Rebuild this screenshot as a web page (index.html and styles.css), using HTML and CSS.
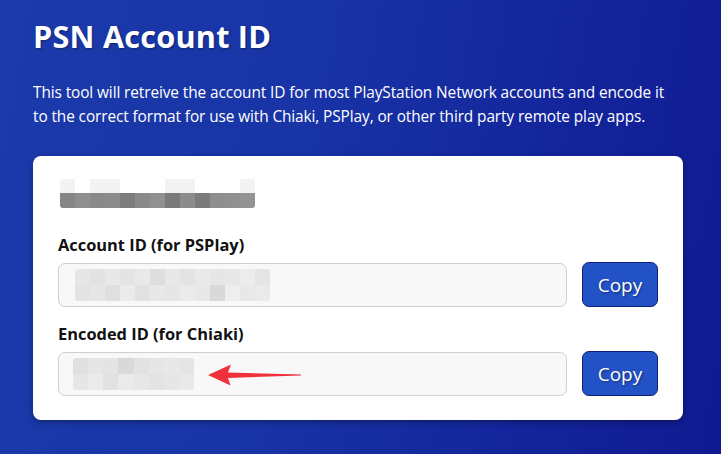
FILE: index.html
```html
<!DOCTYPE html>
<html>
<head>
<meta charset="utf-8">
<link rel="stylesheet" href="styles.css">
</head>
<body>
<main class="page">
  <h1 class="title">PSN Account ID</h1>
  <p class="intro">This tool will retreive the account ID for most PlayStation Network accounts and encode it to the correct format for use with Chiaki, PSPlay, or other third party remote play apps.</p>
  <section class="card">
    <div class="name-blur">
      <div class="row top">
        <i style="background:#f3f3f3"></i><i style="background:#fff"></i><i style="background:#f3f3f3"></i><i style="background:#f3f3f3"></i><i style="background:#fff"></i><i style="background:#fff"></i><i style="background:#fff"></i><i style="background:#f3f3f3"></i><i style="background:#f3f3f3"></i><i style="background:#fff"></i><i style="background:#fff"></i><i style="background:#fff"></i><i style="background:#f3f3f3"></i>
      </div>
      <div class="row">
        <i style="background:#858585"></i><i style="background:#8f8f8f"></i><i style="background:#8a8a8a"></i><i style="background:#8c8c8c"></i><i style="background:#7d7d7d"></i><i style="background:#8a8a8a"></i><i style="background:#909090"></i><i style="background:#7a7a7a"></i><i style="background:#8c8c8c"></i><i style="background:#7b7b7b"></i><i style="background:#8e8e8e"></i><i style="background:#909090"></i><i style="background:#939393"></i>
      </div>
    </div>
    <label class="label">Account ID (for PSPlay)</label>
    <div class="field-row">
      <div class="input">
        <div class="blur wide">
          <div class="row"><i style="background:#e6e6e6"></i><i style="background:#e2e2e2"></i><i style="background:#e8e8e8"></i><i style="background:#e4e4e4"></i><i style="background:#e9e9e9"></i><i style="background:#dedede"></i><i style="background:#e8e8e8"></i><i style="background:#e3e3e3"></i><i style="background:#e9e9e9"></i><i style="background:#e6e6e6"></i><i style="background:#e7e7e7"></i><i style="background:#ececec"></i><i style="background:#e5e5e5"></i></div>
          <div class="row"><i style="background:#e3e3e3"></i><i style="background:#e6e6e6"></i><i style="background:#dfdfdf"></i><i style="background:#ebebeb"></i><i style="background:#e1e1e1"></i><i style="background:#e8e8e8"></i><i style="background:#e6e6e6"></i><i style="background:#ebebeb"></i><i style="background:#e8e8e8"></i><i style="background:#d9d9d9"></i><i style="background:#eeeeee"></i><i style="background:#e8e8e8"></i><i style="background:#eaeaea"></i></div>
        </div>
      </div>
      <button class="copy">Copy</button>
    </div>
    <label class="label">Encoded ID (for Chiaki)</label>
    <div class="field-row">
      <div class="input">
        <div class="blur narrow">
          <div class="row"><i style="background:#e0e0e0"></i><i style="background:#e6e6e6"></i><i style="background:#e4e4e4"></i><i style="background:#d9d9d9"></i><i style="background:#e2e2e2"></i><i style="background:#e6e6e6"></i><i style="background:#e8e8e8"></i><i style="background:#e5e5e5"></i></div>
          <div class="row"><i style="background:#e6e6e6"></i><i style="background:#ebebeb"></i><i style="background:#e1e1e1"></i><i style="background:#eaeaea"></i><i style="background:#e7e7e7"></i><i style="background:#e3e3e3"></i><i style="background:#e6e6e6"></i><i style="background:#e9e9e9"></i></div>
        </div>
        <svg class="arrow" width="96" height="24" viewBox="0 0 96 24">
          <path d="M1 12 L24 1.5 L21 9.5 L94 11.5 L94 12.5 L21 15 L23.5 22.5 Z" fill="#f0303a"/>
        </svg>
      </div>
      <button class="copy">Copy</button>
    </div>
  </section>
</main>
</body>
</html>
```
FILE: styles.css
```css
html, body {
  margin: 0;
  padding: 0;
  height: 100%;
}
body {
  background: linear-gradient(100deg, #1c3aab 0%, #1834a6 40%, #13249b 75%, #0f1a90 100%);
  font-family: "Open Sans", "Noto Sans", sans-serif;
  color: #fff;
  overflow: hidden;
}
.page {
  padding: 15px 38px 0 33px;
}
.title {
  margin: 0;
  font-size: 30.7px;
  font-weight: 700;
  line-height: 42px;
  letter-spacing: 0.2px;
  text-shadow: 1px 1px 2px rgba(0,0,0,0.35);
}
.intro {
  margin: 24px 0 0 0;
  width: 645px;
  font-size: 15.4px;
  line-height: 24px;
  letter-spacing: -0.1px;
}
.card {
  margin-top: 27px;
  width: 650px;
  box-sizing: border-box;
  background: #fff;
  border-radius: 8px;
  box-shadow: 0 2px 6px rgba(0,0,0,0.35);
  padding: 23px 25px 24px 25px;
  color: #111;
}
.name-blur {
  width: 195px;
  margin-left: 2px;
  border-radius: 3px;
  overflow: hidden;
}
.row {
  display: flex;
}
.row i {
  flex: 1;
  height: 15px;
}
.name-blur .row.top i { height: 14px; }
.label {
  display: block;
  margin-top: 27px;
  font-size: 16.4px;
  font-weight: 700;
  line-height: 20px;
  color: #111;
}
.field-row {
  display: flex;
  align-items: center;
  gap: 15px;
  margin-top: 7px;
}
.field-row + .label {
  margin-top: 17px;
}
.input {
  position: relative;
  flex: 1;
  height: 44px;
  box-sizing: border-box;
  border: 1px solid #cfcfcf;
  border-radius: 7px;
  background: #f8f8f8;
  display: flex;
  align-items: center;
  padding-left: 16px;
}
.blur {
  border-radius: 3px;
  overflow: hidden;
}
.blur .row i { height: 16px; }
.blur.wide { width: 195px; }
.blur.narrow { width: 121px; margin-left: -2px; }
.arrow {
  position: absolute;
  left: 148px;
  top: 10px;
}
.copy {
  width: 76px;
  height: 45px;
  background: #2352c7;
  border: 1px solid #0d1f78;
  border-radius: 7px;
  color: #fff;
  font-family: "Open Sans", "Noto Sans", sans-serif;
  font-size: 19px;
  padding: 0;
  text-shadow: 1px 1px 2px rgba(0,0,0,0.4);
}
```
